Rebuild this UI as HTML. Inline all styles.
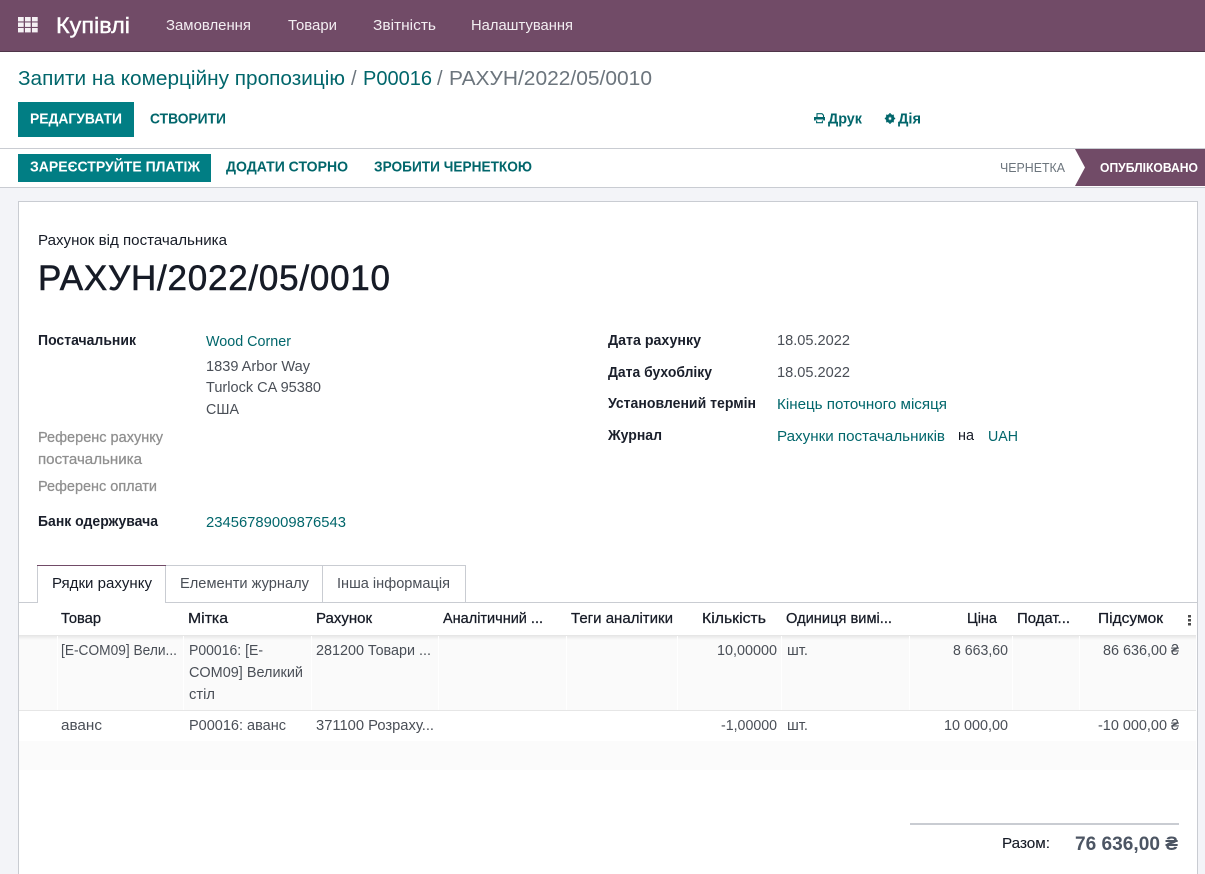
<!DOCTYPE html>
<html lang="uk">
<head>
<meta charset="utf-8">
<title>РАХУН/2022/05/0010</title>
<style>
html,body{margin:0;padding:0;width:1205px;height:874px;overflow:hidden;background:#fff}
svg{display:block}
text{font-family:"Liberation Sans",sans-serif;font-size:14.5px;fill:#4a4f57;white-space:pre}
.w{fill:#fff}
.nav{fill:#f3eef2;font-size:15px}
.l{fill:#01666b}
.g{fill:#6c757d}
.b{font-weight:700;fill:#1a1f2b;font-size:14.5px}
.k{fill:#161b26;stroke:#161b26;stroke-width:.25px}
.r{fill:#4c5563}
.btn{font-weight:700;font-size:15px}
.h{fill:#161b26;stroke:#161b26;stroke-width:.25px}
.gl{fill:#8f8f8f}
</style>
</head>
<body>
<svg width="1205" height="874" viewBox="0 0 1205 874" xmlns="http://www.w3.org/2000/svg">
<rect width="1205" height="874" fill="#fff"/>
<!-- navbar -->
<rect width="1205" height="51" fill="#714b67"/>
<rect y="51" width="1205" height="1" fill="#4f3548"/>
<g fill="#f5f1f4">
<rect x="18" y="17" width="5.700" height="4.400"/><rect x="25" y="17" width="5.700" height="4.400"/><rect x="32" y="17" width="5.700" height="4.400"/>
<rect x="18" y="22.500" width="5.700" height="4.400"/><rect x="25" y="22.500" width="5.700" height="4.400"/><rect x="32" y="22.500" width="5.700" height="4.400"/>
<rect x="18" y="28" width="5.700" height="4.400"/><rect x="25" y="28" width="5.700" height="4.400"/><rect x="32" y="28" width="5.700" height="4.400"/>
</g>
<text x="56" y="33" class="w" style="font-size:22.500px;stroke:#fff;stroke-width:.4px" textLength="74" lengthAdjust="spacingAndGlyphs">Купівлі</text>
<text x="166" y="30" class="nav" textLength="85" lengthAdjust="spacingAndGlyphs">Замовлення</text>
<text x="288" y="30" class="nav" textLength="49" lengthAdjust="spacingAndGlyphs">Товари</text>
<text x="373" y="30" class="nav" textLength="63" lengthAdjust="spacingAndGlyphs">Звітність</text>
<text x="471" y="30" class="nav" textLength="102" lengthAdjust="spacingAndGlyphs">Налаштування</text>
<!-- breadcrumb -->
<text x="18" y="85" class="l" style="font-size:20.500px" textLength="327" lengthAdjust="spacingAndGlyphs">Запити на комерційну пропозицію</text>
<text x="351" y="85" class="g" style="font-size:20px">/</text>
<text x="363" y="85" class="l" style="font-size:20.500px" textLength="69" lengthAdjust="spacingAndGlyphs">P00016</text>
<text x="437" y="85" class="g" style="font-size:20px">/</text>
<text x="449" y="85" class="g" style="font-size:20.500px" textLength="203" lengthAdjust="spacingAndGlyphs">РАХУН/2022/05/0010</text>
<!-- buttons -->
<rect x="18" y="102" width="116" height="35" fill="#017e84"/>
<text x="30" y="123.500" class="btn w" textLength="92" lengthAdjust="spacingAndGlyphs">РЕДАГУВАТИ</text>
<text x="150" y="123.500" class="btn l" textLength="76" lengthAdjust="spacingAndGlyphs">СТВОРИТИ</text>
<path d="M817 117v-3.300h5l1.500 1.500V117" fill="none" stroke="#01666b" stroke-width="1.100"/>
<path d="M814 117h11v3.500h-1.800v-1h-7.400v1H814z" fill="#01666b"/>
<path d="M816.600 120.500v2.200h5.800v-2.200" fill="none" stroke="#01666b" stroke-width="1.100"/>
<text x="828" y="123.500" class="l" style="font-weight:700;font-size:15px" textLength="34" lengthAdjust="spacingAndGlyphs">Друк</text>
<circle cx="890" cy="118.500" r="3.300" fill="none" stroke="#01666b" stroke-width="2.400"/>
<path d="M890 113v11M884.800 118.500h10.400M886.300 114.800l7.400 7.400M893.700 114.800l-7.400 7.400" stroke="#01666b" stroke-width="1.300"/>
<circle cx="890" cy="118.500" r="1.300" fill="#fff"/>
<text x="898" y="123.500" class="l" style="font-weight:700;font-size:15px" textLength="23" lengthAdjust="spacingAndGlyphs">Дія</text>
<!-- status bar -->
<rect y="148" width="1205" height="1" fill="#c9ccd2"/>
<rect y="187" width="1205" height="687" fill="#f3f4f8"/>
<rect y="187" width="1205" height="1" fill="#c9ccd2"/>
<rect x="18" y="154" width="193" height="28" fill="#017e84"/>
<text x="30" y="171.500" class="btn w" textLength="170" lengthAdjust="spacingAndGlyphs">ЗАРЕЄСТРУЙТЕ ПЛАТІЖ</text>
<text x="226" y="171.500" class="btn l" textLength="122" lengthAdjust="spacingAndGlyphs">ДОДАТИ СТОРНО</text>
<text x="374" y="171.500" class="btn l" textLength="158" lengthAdjust="spacingAndGlyphs">ЗРОБИТИ ЧЕРНЕТКОЮ</text>
<text x="1000" y="172" class="g" style="font-size:13px" textLength="65" lengthAdjust="spacingAndGlyphs">ЧЕРНЕТКА</text>
<path d="M1075 149H1205V186H1075L1085 167.500Z" fill="#714b67"/>
<text x="1100" y="172" class="w" style="font-size:13px;font-weight:700" textLength="98" lengthAdjust="spacingAndGlyphs">ОПУБЛІКОВАНО</text>
<!-- sheet -->
<rect x="18.500" y="201.500" width="1179" height="680" fill="#fff" stroke="#c9ccd2"/>
<text x="38" y="245" class="k" style="stroke-width:0" textLength="189" lengthAdjust="spacingAndGlyphs">Рахунок від постачальника</text>
<text x="38" y="290" class="k" style="font-size:35px;stroke-width:.55px" textLength="352" lengthAdjust="spacing">РАХУН/2022/05/0010</text>
<text x="38" y="345" class="b" textLength="98" lengthAdjust="spacingAndGlyphs">Постачальник</text>
<text x="206" y="346" class="l" textLength="85" lengthAdjust="spacingAndGlyphs">Wood Corner</text>
<text x="206" y="371" textLength="104" lengthAdjust="spacingAndGlyphs">1839 Arbor Way</text>
<text x="206" y="392" textLength="115" lengthAdjust="spacingAndGlyphs">Turlock CA 95380</text>
<text x="206" y="414" textLength="33" lengthAdjust="spacingAndGlyphs">США</text>
<text x="38" y="442" class="gl" textLength="125" lengthAdjust="spacingAndGlyphs" style="stroke:#8f8f8f;stroke-width:.25px">Референс рахунку</text>
<text x="38" y="464" class="gl" textLength="104" lengthAdjust="spacingAndGlyphs" style="stroke:#8f8f8f;stroke-width:.25px">постачальника</text>
<text x="38" y="491" class="gl" textLength="119" lengthAdjust="spacingAndGlyphs" style="stroke:#8f8f8f;stroke-width:.25px">Референс оплати</text>
<text x="38" y="526" class="b" textLength="120" lengthAdjust="spacingAndGlyphs">Банк одержувача</text>
<text x="206" y="527" class="l" textLength="140" lengthAdjust="spacingAndGlyphs">23456789009876543</text>
<text x="608" y="345" class="b" textLength="93" lengthAdjust="spacingAndGlyphs">Дата рахунку</text>
<text x="777" y="345" textLength="73" lengthAdjust="spacingAndGlyphs">18.05.2022</text>
<text x="608" y="377" class="b" textLength="104" lengthAdjust="spacingAndGlyphs">Дата бухобліку</text>
<text x="777" y="377" textLength="73" lengthAdjust="spacingAndGlyphs">18.05.2022</text>
<text x="608" y="408" class="b" textLength="148" lengthAdjust="spacingAndGlyphs">Установлений термін</text>
<text x="777" y="409" class="l" textLength="170" lengthAdjust="spacingAndGlyphs">Кінець поточного місяця</text>
<text x="608" y="440" class="b" textLength="54" lengthAdjust="spacingAndGlyphs">Журнал</text>
<text x="777" y="441" class="l" textLength="168" lengthAdjust="spacingAndGlyphs">Рахунки постачальників</text>
<text x="958" y="440" class="k" style="stroke-width:0" textLength="16" lengthAdjust="spacingAndGlyphs">на</text>
<text x="988" y="441" class="l" textLength="30" lengthAdjust="spacingAndGlyphs">UAH</text>
<!-- tabs -->
<rect x="19" y="602" width="1178" height="1" fill="#c9ccd2"/>
<path d="M165.500 602V565.500H322.500V602M322.500 565.500H465.500V602" fill="none" stroke="#c9ccd2"/>
<rect x="38" y="566" width="127" height="38" fill="#fff"/>
<path d="M37.500 603V565.500M165.500 603V565.500" fill="none" stroke="#c9ccd2"/>
<rect x="37" y="565" width="129" height="1" fill="#714b67"/>
<text x="52" y="588" class="k" style="stroke-width:0" textLength="100" lengthAdjust="spacingAndGlyphs">Рядки рахунку</text>
<text x="180" y="588" textLength="129" lengthAdjust="spacingAndGlyphs">Елементи журналу</text>
<text x="337" y="588" textLength="113" lengthAdjust="spacingAndGlyphs">Інша інформація</text>
<!-- table -->
<defs><linearGradient id="s" x1="0" y1="0" x2="0" y2="1"><stop offset="0" stop-color="#e4e4e4"/><stop offset="1" stop-color="#fafafa"/></linearGradient></defs>
<rect x="19" y="635" width="1177" height="75" fill="#fafafa"/>
<rect x="19" y="635" width="1177" height="5" fill="url(#s)"/>
<rect x="19" y="710" width="1177" height="1" fill="#e6e6e6"/>
<rect x="19" y="741" width="1177" height="29" fill="#fbfbfb"/>
<g fill="#fff">
<rect x="57" y="636" width="1" height="74"/><rect x="183" y="636" width="1" height="74"/><rect x="311" y="636" width="1" height="74"/><rect x="438" y="636" width="1" height="74"/><rect x="566" y="636" width="1" height="74"/><rect x="677" y="636" width="1" height="74"/><rect x="781" y="636" width="1" height="74"/><rect x="909" y="636" width="1" height="74"/><rect x="1012" y="636" width="1" height="74"/><rect x="1079" y="636" width="1" height="74"/>
</g>
<text x="61" y="623" class="h" textLength="40" lengthAdjust="spacingAndGlyphs">Товар</text>
<text x="188" y="623" class="h" textLength="40" lengthAdjust="spacingAndGlyphs">Мітка</text>
<text x="316" y="623" class="h" textLength="56" lengthAdjust="spacingAndGlyphs">Рахунок</text>
<text x="443" y="623" class="h" textLength="100" lengthAdjust="spacingAndGlyphs">Аналітичний ...</text>
<text x="571" y="623" class="h" textLength="102" lengthAdjust="spacingAndGlyphs">Теги аналітики</text>
<text x="702" y="623" class="h" textLength="64" lengthAdjust="spacingAndGlyphs">Кількість</text>
<text x="786" y="623" class="h" textLength="106" lengthAdjust="spacingAndGlyphs">Одиниця вимі...</text>
<text x="967" y="623" class="h" textLength="30" lengthAdjust="spacingAndGlyphs">Ціна</text>
<text x="1017" y="623" class="h" textLength="53" lengthAdjust="spacingAndGlyphs">Подат...</text>
<text x="1098" y="623" class="h" textLength="65" lengthAdjust="spacingAndGlyphs">Підсумок</text>
<g fill="#4c4c4c"><rect x="1188" y="615" width="3" height="2.500"/><rect x="1188" y="619" width="3" height="2.500"/><rect x="1188" y="623" width="3" height="2.500"/></g>
<text x="61" y="655" textLength="116" lengthAdjust="spacingAndGlyphs">[E-COM09] Вели...</text>
<text x="189" y="655" textLength="74" lengthAdjust="spacingAndGlyphs">P00016: [E-</text>
<text x="189" y="677" textLength="114" lengthAdjust="spacingAndGlyphs">COM09] Великий</text>
<text x="189" y="699" textLength="26" lengthAdjust="spacingAndGlyphs">стіл</text>
<text x="316" y="655" textLength="115" lengthAdjust="spacingAndGlyphs">281200 Товари ...</text>
<text x="717" y="655" textLength="60" lengthAdjust="spacingAndGlyphs">10,00000</text>
<text x="787" y="655" textLength="21" lengthAdjust="spacingAndGlyphs">шт.</text>
<text x="953" y="655" textLength="55" lengthAdjust="spacingAndGlyphs">8 663,60</text>
<text x="1103" y="655" textLength="76" lengthAdjust="spacingAndGlyphs">86 636,00 ₴</text>
<text x="61" y="730" textLength="41" lengthAdjust="spacingAndGlyphs">аванс</text>
<text x="189" y="730" textLength="97" lengthAdjust="spacingAndGlyphs">P00016: аванс</text>
<text x="316" y="730" textLength="118" lengthAdjust="spacingAndGlyphs">371100 Розраху...</text>
<text x="721" y="730" textLength="56" lengthAdjust="spacingAndGlyphs">-1,00000</text>
<text x="787" y="730" textLength="21" lengthAdjust="spacingAndGlyphs">шт.</text>
<text x="944" y="730" textLength="64" lengthAdjust="spacingAndGlyphs">10 000,00</text>
<text x="1098" y="730" textLength="81" lengthAdjust="spacingAndGlyphs">-10 000,00 ₴</text>
<!-- totals -->
<rect x="910" y="823" width="269" height="2" fill="#c9ccd2"/>
<text x="1002" y="848" class="k" style="stroke-width:.1px" textLength="48" lengthAdjust="spacingAndGlyphs">Разом:</text>
<text x="1075" y="850" class="r" style="font-size:19.500px;font-weight:700" textLength="103" lengthAdjust="spacingAndGlyphs">76 636,00 ₴</text>
</svg>
</body>
</html>
